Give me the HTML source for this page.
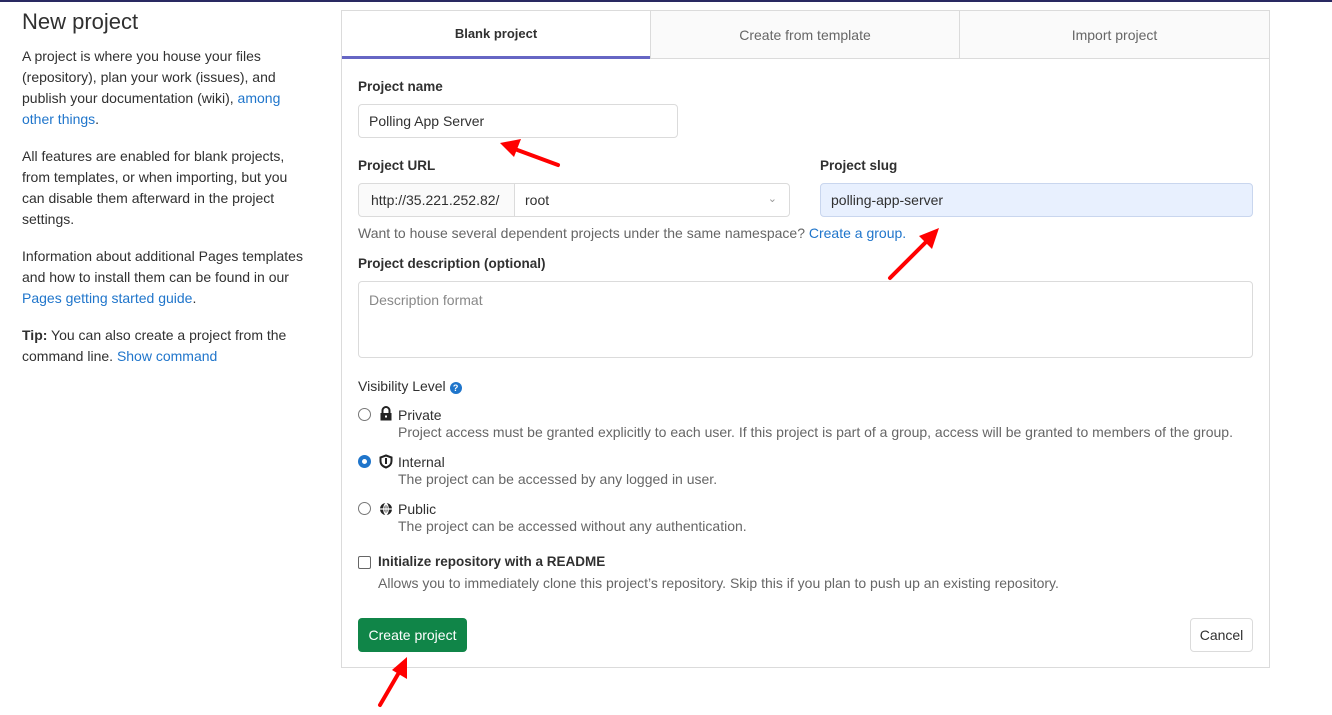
<!DOCTYPE html>
<html><head><style>
*{box-sizing:border-box}
body{margin:0;width:1332px;height:713px;background:#fff;font-family:"Liberation Sans",sans-serif;font-size:14px;color:#303030;position:relative;overflow:hidden;border-top:2px solid #292961}
.a{position:absolute;white-space:nowrap}
a,.l{color:#1f75cb;text-decoration:none}
.left p{margin:0 0 16px;line-height:21px;white-space:nowrap}
.inp{position:absolute;border:1px solid #dbdbdb;border-radius:4px;background:#fff;padding:0 10px;display:flex;align-items:center;font-size:14px;white-space:nowrap}
.lbl{position:absolute;font-weight:bold;font-size:13.5px}
.radio{position:absolute;width:13px;height:13px;border:1px solid #777;border-radius:50%;background:#fff}
.sub{color:#666}
</style></head><body>
<div class="a left" style="left:22px;top:7px;width:290px">
<div style="font-size:22px;margin-bottom:11px;color:#303030">New project</div>
<p>A project is where you house your files<br>(repository), plan your work (issues), and<br>publish your documentation (wiki), <a>among</a><br><a>other things</a>.</p>
<p>All features are enabled for blank projects,<br>from templates, or when importing, but you<br>can disable them afterward in the project<br>settings.</p>
<p>Information about additional Pages templates<br>and how to install them can be found in our<br><a>Pages getting started guide</a>.</p>
<p><b>Tip:</b> You can also create a project from the<br>command line. <a>Show command</a></p>
</div>
<div class="a" style="left:341px;top:8px;width:929px;height:658px;border:1px solid #dbdbdb"></div>
<div class="a" style="left:342px;top:9px;width:308px;height:48px;border-bottom:3px solid #6666c4;display:flex;align-items:center;justify-content:center;font-weight:bold;font-size:13px">Blank project</div>
<div class="a" style="left:650px;top:9px;width:309px;height:48px;background:#fafafa;border-left:1px solid #dbdbdb;border-bottom:1px solid #dbdbdb;display:flex;align-items:center;justify-content:center;color:#666">Create from template</div>
<div class="a" style="left:959px;top:9px;width:310px;height:48px;background:#fafafa;border-left:1px solid #dbdbdb;border-bottom:1px solid #dbdbdb;display:flex;align-items:center;justify-content:center;color:#666">Import project</div>

<div class="lbl" style="left:358px;top:77px">Project name</div>
<div class="inp" style="left:358px;top:102px;width:320px;height:34px">Polling App Server</div>
<div class="lbl" style="left:358px;top:156px">Project URL</div>
<div class="inp" style="left:358px;top:181px;width:157px;height:34px;background:#fafafa;border-radius:4px 0 0 4px;color:#303030;padding:0 12px">http://35.221.252.82/</div>
<div class="inp" style="left:514px;top:181px;width:276px;height:34px;border-radius:0 4px 4px 0">root<span style="position:absolute;right:12px;top:8px;color:#999;font-size:11px">&#8964;</span></div>
<div class="lbl" style="left:820px;top:156px">Project slug</div>
<div class="inp" style="left:820px;top:181px;width:433px;height:34px;background:#e8f0fe;border-color:#c9d6ee">polling-app-server</div>
<div class="a sub" style="left:358px;top:223px">Want to house several dependent projects under the same namespace? <a>Create a group.</a></div>
<div class="lbl" style="left:358px;top:254px">Project description (optional)</div>
<div class="inp" style="left:358px;top:279px;width:895px;height:77px;align-items:flex-start;padding-top:10px;color:#888">Description format</div>
<div class="a" style="left:358px;top:376px">Visibility Level <span style="display:inline-block;width:12px;height:12px;border-radius:50%;background:#1f75cb;color:#fff;font-size:9px;text-align:center;line-height:12px;font-weight:bold">?</span></div>

<div class="radio" style="left:358px;top:406px"></div>
<svg class="a" style="left:379px;top:404px" width="14" height="15" viewBox="0 0 14 15"><path d="M3.5 7V4.5a3.5 3.5 0 0 1 7 0V7" fill="none" stroke="#222" stroke-width="2"/><rect x="1.5" y="7" width="11" height="7.5" fill="#222"/><rect x="6" y="9.5" width="2" height="2" fill="#fff"/></svg>
<div class="a" style="left:398px;top:405px">Private</div>
<div class="a sub" style="left:398px;top:422px">Project access must be granted explicitly to each user. If this project is part of a group, access will be granted to members of the group.</div>

<div class="radio" style="left:358px;top:453px;border:4px solid #1f75cb;box-shadow:inset 0 0 0 1px #fff"></div>
<svg class="a" style="left:379px;top:452px" width="14" height="15" viewBox="0 0 14 15"><path d="M7 1.5L12.5 3.5V7c0 3.5-2.5 5.5-5.5 6.5C4 12.5 1.5 10.5 1.5 7V3.5z" fill="none" stroke="#222" stroke-width="2"/><path d="M7 4v6" stroke="#222" stroke-width="2"/></svg>
<div class="a" style="left:398px;top:452px">Internal</div>
<div class="a sub" style="left:398px;top:469px">The project can be accessed by any logged in user.</div>

<div class="radio" style="left:358px;top:500px"></div>
<svg class="a" style="left:379px;top:500px" width="14" height="14" viewBox="0 0 14 14"><circle cx="7" cy="7" r="6" fill="#222"/><path d="M1 7h12M7 1v12M7 1c-3 3-3 9 0 12M7 1c3 3 3 9 0 12" stroke="#fff" stroke-width="1.2" fill="none"/></svg>
<div class="a" style="left:398px;top:499px">Public</div>
<div class="a sub" style="left:398px;top:516px">The project can be accessed without any authentication.</div>

<div class="a" style="left:358px;top:554px;width:13px;height:13px;border:1px solid #666;border-radius:2px"></div>
<div class="a" style="left:378px;top:552px;font-weight:bold;font-size:13.5px">Initialize repository with a README</div>
<div class="a sub" style="left:378px;top:573px">Allows you to immediately clone this project’s repository. Skip this if you plan to push up an existing repository.</div>

<div class="a" style="left:358px;top:616px;width:109px;height:34px;background:#108548;border-radius:4px;color:#fff;display:flex;align-items:center;justify-content:center">Create project</div>
<div class="a" style="left:1190px;top:616px;width:63px;height:34px;border:1px solid #dbdbdb;border-radius:4px;display:flex;align-items:center;justify-content:center">Cancel</div>

<svg class="a" style="left:0;top:0" width="1332" height="713">
<g stroke="#f00" stroke-width="4" stroke-linecap="round" fill="#f00">
<line x1="558" y1="163" x2="512" y2="146"/>
<line x1="890" y1="276" x2="930" y2="236"/>
<line x1="380" y1="703" x2="401" y2="667"/>
</g>
<g fill="#f00" stroke="none">
<polygon points="500,141 521,137 514,155"/>
<polygon points="939,226 932,247 919,234"/>
<polygon points="407,655 407,677 392,668"/>
</g>
</svg>
</body></html>
